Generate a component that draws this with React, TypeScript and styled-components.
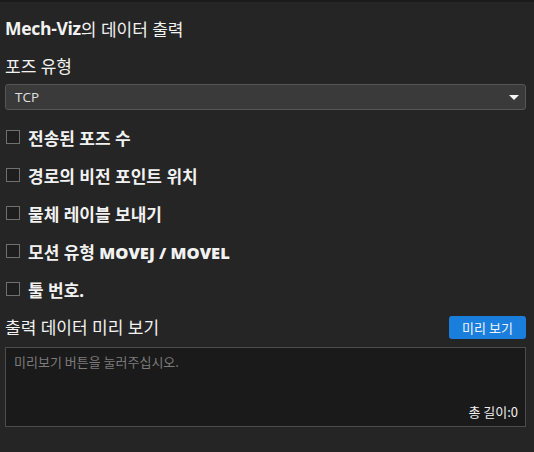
import React, { useState } from 'react';
import styled, { createGlobalStyle } from 'styled-components';

const GlobalStyle = createGlobalStyle`
    html, body {
        margin: 0;
        padding: 0;
        background: #252525;
    }
    body {
        font-family: "Noto Sans", "Noto Sans CJK KR", sans-serif;
        color: #f2f2f2;
    }
`;

const options = [
    { key: 'count', label: '전송된 포즈 수' },
    { key: 'vision', label: '경로의 비전 포인트 위치' },
    { key: 'label', label: '물체 레이블 보내기' },
    { key: 'motion', label: '모션 유형', latin: 'MOVEJ / MOVEL' },
    { key: 'tool', label: '툴 번호.' },
];

const App = () => {
    const [checked, setChecked] = useState<Record<string, boolean>>({});
    const [preview, setPreview] = useState('');

    const toggle = (key: string) => {
        setChecked({ ...checked, [key]: !checked[key] });
    };

    return (
        <Panel>
            <GlobalStyle />
            <Title>
                <b>Mech-Viz</b>의 데이터 출력
            </Title>
            <FieldLabel>포즈 유형</FieldLabel>
            <Select>
                <span>TCP</span>
                <Caret />
            </Select>
            <CheckList>
                {options.map(opt => (
                    <CheckRow key={opt.key} onClick={() => toggle(opt.key)}>
                        <Box checked={!!checked[opt.key]} />
                        <CheckText>
                            {opt.label}
                            {opt.latin && <Latin> {opt.latin}</Latin>}
                        </CheckText>
                    </CheckRow>
                ))}
            </CheckList>
            <PreviewHeader>
                <HeaderLabel>출력 데이터 미리 보기</HeaderLabel>
                <PreviewButton onClick={() => setPreview('')}>미리 보기</PreviewButton>
            </PreviewHeader>
            <Output>
                <Placeholder>{preview || '미리보기 버튼을 눌러주십시오.'}</Placeholder>
                <Length>총 길이:{preview.length}</Length>
            </Output>
        </Panel>
    );
};

export default App;

const Panel = styled.div`
    border-top: 2px solid #1b1b1b;
    padding: 12px 8px 0 5px;
    height: 450px;
    box-sizing: border-box;
    display: flex;
    flex-direction: column;
`;

const Title = styled.div`
    height: 28px;
    display: flex;
    align-items: center;
    font-size: 17px;
    white-space: pre;

    b {
        font-family: "Open Sans", "Noto Sans", sans-serif;
        font-weight: 700;
        font-size: 17.5px;
        letter-spacing: -0.3px;
    }
`;

const FieldLabel = styled.div`
    height: 28px;
    margin-top: 9px;
    display: flex;
    align-items: center;
    font-size: 17px;
`;

const HeaderLabel = styled.span`
    font-size: 17px;
    margin-top: -2px;
`;

const Select = styled.div`
    margin-top: 5px;
    height: 26px;
    box-sizing: border-box;
    border: 1px solid #565656;
    border-radius: 3px;
    background: #3a3a3a;
    display: flex;
    align-items: center;
    justify-content: space-between;
    padding: 0 6px 0 9px;
    font-size: 13.5px;
    color: #e0e0e0;
    font-family: "Open Sans", "Noto Sans", sans-serif;
`;

const Caret = styled.span`
    width: 0;
    height: 0;
    border-left: 5px solid transparent;
    border-right: 5px solid transparent;
    border-top: 5px solid #f5f5f5;
`;

const CheckList = styled.div`
    margin-top: 8px;
    display: flex;
    flex-direction: column;
`;

const CheckRow = styled.div`
    height: 38px;
    display: flex;
    align-items: center;
    gap: 8px;
    padding-left: 1px;
    cursor: pointer;
`;

const Box = styled.span<{ checked: boolean }>`
    display: block;
    flex: none;
    width: 14px;
    height: 14px;
    margin-top: -1px;
    box-sizing: border-box;
    border: 1px solid #707070;
    background: ${props => (props.checked ? '#1a7fdc' : '#1e1e1e')};
`;

const CheckText = styled.span`
    font-size: 17px;
    font-weight: 700;
    white-space: pre;
`;

const Latin = styled.span`
    font-family: "Open Sans", "Noto Sans", sans-serif;
    font-weight: 800;
    font-size: 16.5px;
`;

const PreviewHeader = styled.div`
    height: 38px;
    display: flex;
    align-items: center;
    justify-content: space-between;
`;

const PreviewButton = styled.button`
    width: 77px;
    height: 23px;
    border: none;
    border-radius: 3px;
    background: #1a7fdc;
    color: #f0f4fa;
    font-family: "Noto Sans CJK KR", sans-serif;
    font-size: 13px;
    padding: 0;
    cursor: pointer;
`;

const Output = styled.div`
    margin-top: 1px;
    height: 80px;
    box-sizing: border-box;
    border: 1px solid #4c4c4c;
    background: #1a1a1a;
    display: flex;
    flex-direction: column;
    justify-content: space-between;
    padding: 4px 7px 5px 8px;
`;

const Placeholder = styled.div`
    font-size: 13px;
    color: #7c7c7c;
    font-family: "Noto Sans CJK KR", sans-serif;
`;

const Length = styled.div`
    align-self: flex-end;
    font-size: 13px;
    color: #f0f0f0;
    font-family: "Noto Sans CJK KR", sans-serif;
`;
